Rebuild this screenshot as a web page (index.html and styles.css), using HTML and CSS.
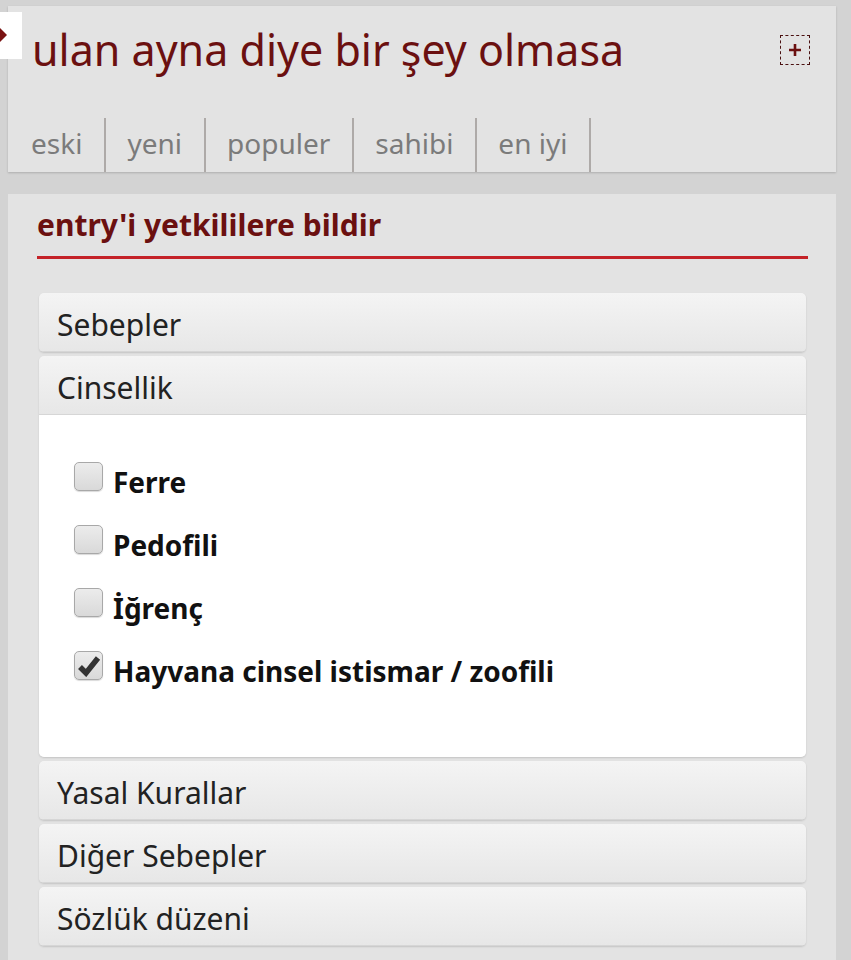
FILE: index.html
```html
<!DOCTYPE html>
<html lang="tr">
<head>
<meta charset="utf-8">
<link rel="stylesheet" href="styles.css">
</head>
<body>
<div class="side-tab"><span class="side-arrow"></span></div>
<header class="topic">
  <div class="topic-head">
    <h1 class="topic-title">ulan ayna diye bir şey olmasa</h1>
    <span class="expand-btn">
      <svg width="14" height="14" viewBox="0 0 14 14"><path d="M7 1v12M1 7h12" stroke="#6b1010" stroke-width="2.6" fill="none"/></svg>
    </span>
  </div>
  <nav class="tabs">
    <a class="tab">eski</a>
    <a class="tab">yeni</a>
    <a class="tab">populer</a>
    <a class="tab">sahibi</a>
    <a class="tab">en iyi</a>
  </nav>
</header>
<main class="report">
  <h2 class="report-title">entry'i yetkililere bildir</h2>
  <div class="accordion">
    <div class="acc-item"><div class="acc-head">Sebepler</div></div>
    <div class="acc-item open">
      <div class="acc-head">Cinsellik</div>
      <div class="acc-body">
        <label class="opt"><span class="cb"></span><span class="opt-text">Ferre</span></label>
        <label class="opt"><span class="cb"></span><span class="opt-text">Pedofili</span></label>
        <label class="opt"><span class="cb"></span><span class="opt-text">İğrenç</span></label>
        <label class="opt"><span class="cb checked"><svg width="24" height="22" viewBox="0 0 24 22"><path d="M3 12l6 6L21 3" stroke="#333" stroke-width="5.5" fill="none" stroke-linejoin="miter" stroke-linecap="butt"/></svg></span><span class="opt-text">Hayvana cinsel istismar / zoofili</span></label>
      </div>
    </div>
    <div class="acc-item"><div class="acc-head">Yasal Kurallar</div></div>
    <div class="acc-item"><div class="acc-head">Diğer Sebepler</div></div>
    <div class="acc-item"><div class="acc-head">Sözlük düzeni</div></div>
  </div>
</main>
</body>
</html>
```

FILE: styles.css
```css
html, body {
  margin: 0;
  padding: 0;
}
body {
  background: #d3d3d3;
  font-family: "Noto Sans", "Open Sans", sans-serif;
  padding: 6px 15px 0 8px;
  overflow: hidden;
  height: 960px;
  box-sizing: border-box;
}
.side-tab {
  position: absolute;
  left: 0;
  top: 12px;
  width: 22px;
  height: 47px;
  background: #fff;
}
.side-arrow {
  position: absolute;
  left: 0;
  top: 16px;
  width: 0;
  height: 0;
  border-top: 7px solid transparent;
  border-bottom: 7px solid transparent;
  border-left: 7px solid #7a1212;
}
.topic {
  background: #e3e3e3;
  box-shadow: 0 1px 2px rgba(0,0,0,0.18);
}
.topic-head {
  display: flex;
  justify-content: space-between;
  align-items: flex-start;
  padding: 0 26px 0 24px;
  height: 112px;
}
.topic-title {
  margin: 17px 0 0;
  font-weight: normal;
  font-size: 43px;
  line-height: 54px;
  color: #6b1010;
}
.expand-btn {
  margin-top: 29px;
  width: 30px;
  height: 30px;
  border: 1.5px dashed #4a1010;
  box-sizing: border-box;
  display: flex;
  align-items: center;
  justify-content: center;
}
.tabs {
  display: flex;
  height: 54px;
  padding-left: 2px;
}
.tab {
  display: flex;
  align-items: center;
  padding: 0 22px 4px 21px;
  font-size: 28px;
  color: #7b7b7b;
  border-right: 2px solid #aeaaa8;
}
.report {
  margin-top: 22px;
  background: #e3e3e3;
  padding: 4px 28px 30px 29px;
  height: 800px;
}
.report-title {
  margin: 0;
  font-size: 30px;
  font-weight: bold;
  color: #6b1010;
  line-height: 54px;
  padding-bottom: 4px;
  border-bottom: 3px solid #c42228;
}
.accordion {
  margin: 34px 2px 0 2px;
  display: flex;
  flex-direction: column;
  gap: 4px;
}
.acc-item {
  border-radius: 5px;
  box-shadow: 0 1px 2px rgba(0,0,0,0.14);
  overflow: hidden;
}
.acc-head {
  height: 59px;
  display: flex;
  align-items: center;
  padding: 4px 0 0 18px;
  font-size: 30px;
  color: #222;
  background: linear-gradient(#f4f4f4, #e7e7e7);
  border-bottom: 1px solid #d6d6d6;
  box-sizing: border-box;
}
.acc-body {
  background: #fff;
  padding: 35px 0 55px 35px;
}
.opt {
  height: 63px;
  display: flex;
  align-items: center;
  gap: 10px;
}
.cb {
  width: 29px;
  height: 29px;
  border: 1.5px solid #a8a8a8;
  border-radius: 5px;
  background: linear-gradient(#ececec, #d9d9d9);
  box-shadow: 0 1px 1px rgba(0,0,0,0.15);
  display: flex;
  align-items: center;
  justify-content: center;
  margin-top: -10px;
  box-sizing: border-box;
}
.opt-text {
  font-size: 28px;
  line-height: 38px;
  font-weight: bold;
  color: #111;
}
```
